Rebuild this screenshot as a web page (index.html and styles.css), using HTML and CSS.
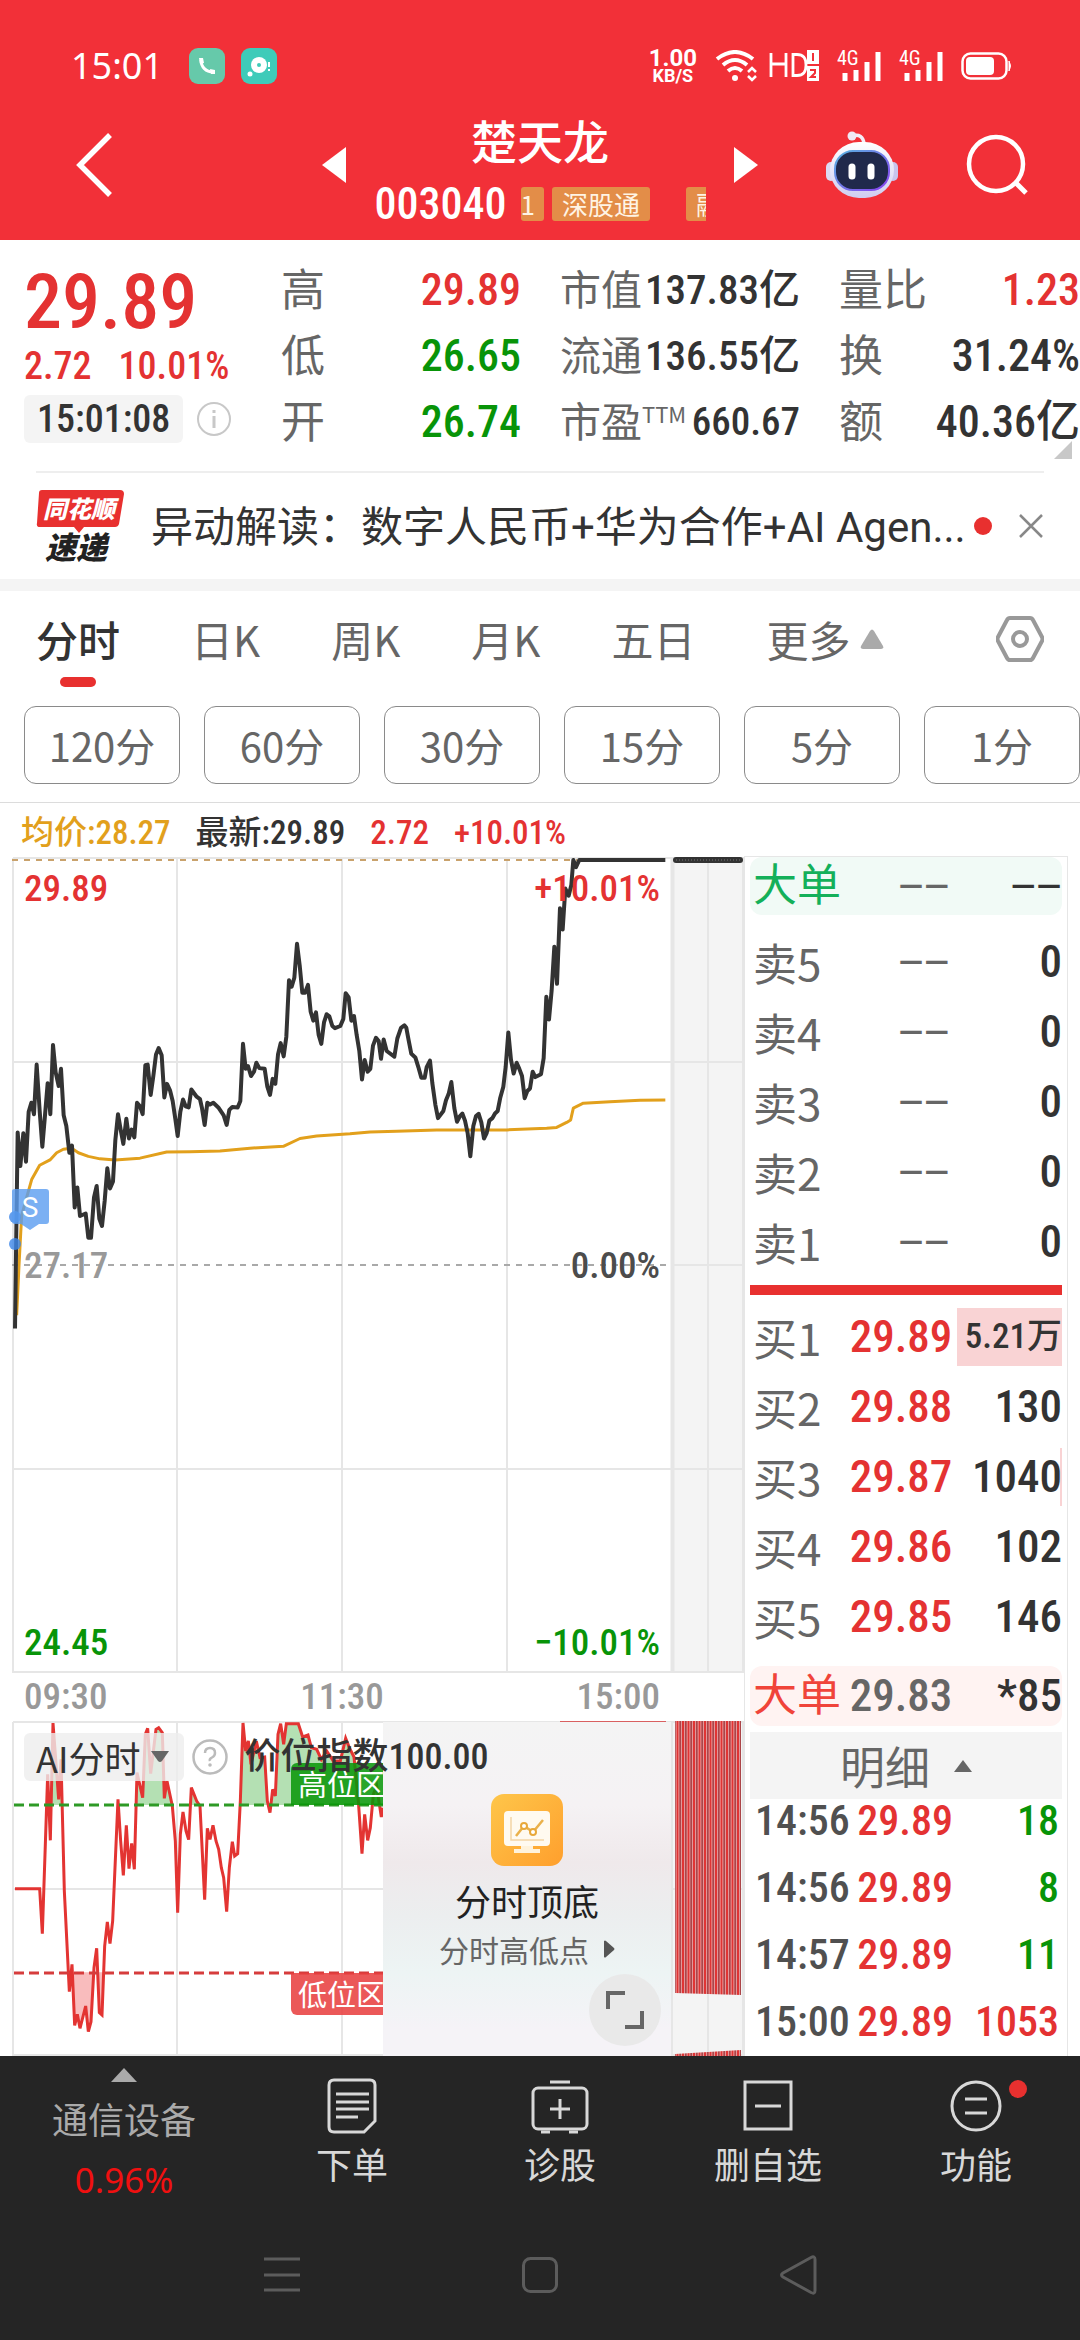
FILE: index.html
```html
<!DOCTYPE html>
<html lang="zh-CN">
<head>
<meta charset="utf-8">
<meta name="viewport" content="width=device-width">
<title>楚天龙 003040</title>
<link rel="stylesheet" href="styles.css">
</head>
<body>
<header class="top">
  <div class="statusbar">
    <span class="clock">15:01</span>
    <svg class="app-icon" width="36" height="36" viewBox="0 0 36 36"><rect width="36" height="36" rx="9" fill="#66c9aa"/><path d="M12 12c0 7 5 12 12 12" fill="none" stroke="#fff" stroke-width="3"/><path d="M10 10h4l1 5-4 1zM21 21l5 1v4h-4z" fill="#fff"/></svg>
    <svg class="app-icon" width="36" height="36" viewBox="0 0 36 36"><rect width="36" height="36" rx="9" fill="#3fcbb9"/><circle cx="18" cy="17" r="8" fill="#fff"/><circle cx="18" cy="17" r="2" fill="#3fcbb9"/><circle cx="9" cy="26" r="2.500" fill="#fff"/><path d="M28 14v5M28 21v2" stroke="#fff" stroke-width="2"/></svg>
    <span class="speed"><b>1.00</b><b class="unit">KB/S</b></span>
    <svg class="wifi" width="42" height="32" viewBox="0 0 42 32" fill="none" stroke="#fff" stroke-width="4"><path d="M2 9q18-14 36 0M8 15q12-10 24 0M13 21q7-6 14 0"/><circle cx="20" cy="28" r="3" fill="#fff" stroke="none"/><path d="M33 22l4-4 4 4M33 26l4 4 4-4" stroke-width="2.500"/></svg>
    <svg class="hd" width="50" height="32" viewBox="0 0 50 32"><path d="M2 3v24M17 3v24M2 14h15M24 4.500v21h4c7 0 9-4 9-10.500S35 4.500 28 4.500z" fill="none" stroke="#fff" stroke-width="2.800"/><path d="M38 0h12v14H38zM38 16h12v15H38z" fill="#fff"/><path d="M44 3v8M41 20h5v3l-4 4h5" fill="none" stroke="#f23038" stroke-width="2"/></svg>
    <svg class="signal" width="44" height="32" viewBox="0 0 44 32"><text x="0" y="15" class="g4">4G</text><path d="M8 31v-8M19 31V20M30 31V12M41 31V2" stroke="#fff" stroke-width="5"/></svg>
    <svg class="signal" width="44" height="32" viewBox="0 0 44 32"><text x="0" y="15" class="g4">4G</text><path d="M8 31v-8M19 31V20M30 31V12M41 31V2" stroke="#fff" stroke-width="5"/></svg>
    <svg class="battery" width="50" height="28" viewBox="0 0 50 28"><rect x="1.500" y="1.500" width="44" height="25" rx="8" fill="none" stroke="#fff" stroke-width="2.500"/><rect x="5" y="5" width="28" height="18" rx="4" fill="#fff"/><path d="M48 9q3 5 0 10z" fill="#fff" stroke="#fff"/></svg>
  </div>
  <div class="titlebar">
    <button class="back" aria-label="返回"><svg width="38" height="64" viewBox="0 0 38 64"><path d="M34 2L4 32l30 30" fill="none" stroke="#fff" stroke-width="5.500"/></svg></button>
    <div class="stock">
      <button aria-label="上一只"><svg width="24" height="36" viewBox="0 0 24 36"><path d="M24 0v36L0 18z" fill="#fff"/></svg></button>
      <div class="names">
        <h1>楚天龙</h1>
        <div class="code"><span class="num">003040</span><div class="tags"><span class="tag first">1</span><span class="tag">深股通</span><span class="tag far">融</span></div></div>
      </div>
      <button aria-label="下一只"><svg width="24" height="36" viewBox="0 0 24 36"><path d="M0 0v36l24-18z" fill="#fff"/></svg></button>
    </div>
    <div class="tools">
      <button aria-label="智能助手"><svg width="74" height="68" viewBox="0 0 74 68"><defs><linearGradient id="head" x2="0" y2="1"><stop offset="0" stop-color="#fff"/><stop offset="1" stop-color="#cfcdf0"/></linearGradient><linearGradient id="rim" x2="1" y2="1"><stop offset="0" stop-color="#58b4e0"/><stop offset="1" stop-color="#8a3ff0"/></linearGradient></defs><path d="M27 5q11-3 12 8" fill="none" stroke="#f4eef8" stroke-width="3.500"/><circle cx="27" cy="5" r="4.500" fill="#f0e8f4"/><rect x="1" y="31" width="10" height="19" rx="5" fill="#dcdaf2"/><rect x="63" y="31" width="10" height="19" rx="5" fill="#c8c4ec"/><rect x="5" y="11" width="64" height="56" rx="29" fill="url(#head)"/><rect x="10" y="20" width="54" height="39" rx="18" fill="#20294b" stroke="url(#rim)" stroke-width="2"/><path d="M27 36v9M46 36v9" stroke="#fff" stroke-width="7" stroke-linecap="round"/></svg></button>
      <button aria-label="搜索"><svg width="62" height="62" viewBox="0 0 62 62" fill="none" stroke="#fff" stroke-width="4.500"><circle cx="30" cy="30" r="27"/><path d="M49 48l11 11" stroke-width="5"/></svg></button>
    </div>
  </div>
</header>

<section class="quote">
  <div class="last">
    <div class="price num up">29.89</div>
    <div class="change num up"><span>2.72</span><span>10.01%</span></div>
    <div class="when"><time class="num">15:01:08</time><svg width="36" height="36" viewBox="0 0 36 36"><circle cx="18" cy="18" r="16" fill="none" stroke="#c8c8c8" stroke-width="2"/><path d="M18 15v12M18 9v3" stroke="#c8c8c8" stroke-width="3"/></svg></div>
  </div>
  <dl><div><dt>高</dt><dd class="num up">29.89</dd></div><div><dt>低</dt><dd class="num down">26.65</dd></div><div><dt>开</dt><dd class="num down">26.74</dd></div></dl>
  <dl class="small"><div><dt>市值</dt><dd class="num">137.83亿</dd></div><div><dt>流通</dt><dd class="num">136.55亿</dd></div><div><dt>市盈<sup>TTM</sup></dt><dd class="num pe">660.67</dd></div></dl>
  <dl><div><dt>量比</dt><dd class="num up">1.23</dd></div><div><dt>换</dt><dd class="num">31.24%</dd></div><div><dt>额</dt><dd class="num">40.36亿</dd></div></dl>
</section>

<section class="news">
  <svg width="88" height="74" viewBox="0 0 88 74"><path d="M6 1h78q4 0 4 4l-5 30q-1 3-4 3H48l-5 6-5-6H4q-4 0-3-4L3 4q0-3 3-3z" fill="#e8302f"/><text x="7" y="29" class="logo-a">同花顺</text><text x="9" y="70" class="logo-b">速递</text></svg>
  <a href="#news">异动解读<span class="colon">：</span>数字人民币+华为合作+AI Agen...</a><i class="dot"></i>
  <button aria-label="关闭"><svg width="26" height="24" viewBox="0 0 26 24"><path d="M2 1l22 22M24 1L2 23" stroke="#888" stroke-width="2.500"/></svg></button>
</section>

<nav class="tabs">
  <button class="on">分时</button><button>日K</button><button>周K</button><button>月K</button><button>五日</button><button class="more">更多<svg width="24" height="20" viewBox="0 0 24 20"><path d="M10 2q2-3 4 0l9 15q1 3-2 3H3q-3 0-2-3z" fill="#aaa"/></svg></button>
  <button class="gear" aria-label="设置"><svg width="48" height="46" viewBox="0 0 48 46" fill="none" stroke="#999" stroke-width="4"><path d="M14 2h20q2 0 3 2l9 17q1 2 0 4l-9 17q-1 2-3 2H14q-2 0-3-2L2 25q-1-2 0-4l9-17q1-2 3-2z"/><circle cx="24" cy="23" r="7"/></svg></button>
</nav>
<div class="periods"><button>120分</button><button>60分</button><button>30分</button><button>15分</button><button>5分</button><button>1分</button></div>

<main>
  <section class="charts">
    <div class="legend num"><span class="avg">均价:28.27</span><span>最新:29.89</span><span class="up">2.72</span><span class="up">+10.01%</span></div>
    <div class="plot">
      <svg viewBox="0 0 744 816">
        <path d="M672 2h72v813h-72z" fill="#f4f4f4"/>
        <path d="M13 1h731M13 205h731M672 408h72M13 612h731M13 815h731M13 1v815M177 1v815M342 1v815M507 1v815M708 1v815M743 1v815" fill="none" stroke="#e6e6e6" stroke-width="2"/>
        <path d="M672.500 1v815" stroke="#e6e6e6" stroke-width="4"/>
        <path d="M12 3h565" stroke="#c9a26c" stroke-width="2" stroke-dasharray="6 6"/>
        <path d="M12 408h655" stroke="#a9a9a9" stroke-width="2" stroke-dasharray="6 6"/>
        <g transform="translate(0 -56) scale(.33333 .35714)" fill="none" stroke-linejoin="round">
          <path class="line avg-line" d="M50 1440L57 1300 65 1160 80 1110 95 1060 119 1020 150 1005 170 985 190 975 215 972 235 985 265 995 300 1002 345 1005 420 1000 500 983 570 982 660 980 750 972 850 967 900 945 950 938 1050 932 1110 927 1190 925 1310 921 1520 921 1640 916 1670 914 1700 900 1712 893 1720 860 1750 846 1830 842 1920 838 1996 837"/>
          <path class="line" d="M45 1477L53 928 61 1022 70 930 78 1010 86 870 94 845 102 877 110 738 119 868 127 968 135 880 143 790 151 877 159 683 167 760 176 798 183 750 191 880 199 910 208 985 216 965 224 1138 232 1082 240 1162 257 1155 265 1223 273 1223 282 1110 290 1078 298 1170 306 1190 314 1120 322 1028 330 1085 339 1065 346 950 354 877 362 920 370 960 379 890 387 945 395 920 403 942 411 845 420 855 428 877 436 740 443 738 452 823 460 770 468 710 476 692 485 712 493 830 501 792 510 810 518 840 526 890 533 938 541 870 549 836 557 855 566 858 574 808 590 828 600 835 606 860 614 907 622 845 630 850 640 845 655 858 671 880 680 907 688 865 697 857 713 858 721 840 729 680 737 750 744 742 753 770 762 758 769 733 778 748 794 750 802 800 810 823 818 778 826 792 834 710 842 678 851 715 859 660 867 502 875 520 883 495 891 400 899 460 907 537 915 537 924 515 932 590 940 615 948 592 956 655 964 680 972 620 980 597 988 603 997 630 1005 636 1021 630 1030 610 1037 538 1046 550 1054 615 1062 602 1070 655 1078 700 1086 780 1094 725 1103 758 1111 750 1119 685 1128 663 1136 672 1143 722 1151 668 1160 700 1183 716 1192 665 1203 635 1213 628 1219 635 1226 670 1234 708 1246 718 1255 745 1264 775 1274 775 1280 745 1290 727 1297 790 1306 850 1314 888 1330 868 1338 838 1346 820 1354 787 1363 860 1371 898 1380 882 1387 875 1395 895 1403 930 1411 995 1420 910 1428 882 1436 876 1444 900 1452 945 1460 930 1468 895 1477 888 1485 875 1493 868 1501 830 1510 800 1517 745 1525 648 1533 725 1541 763 1550 733 1558 750 1566 770 1574 832 1582 812 1590 805 1598 758 1606 773 1623 765 1631 720 1639 548 1647 612 1655 530 1663 408 1671 512 1680 300 1688 360 1696 245 1706 265 1714 235 1720 165 1728 185 1738 165 1996 165"/>
        </g>
        <path d="M676 3h64" stroke="#333" stroke-width="6" stroke-linecap="round"/>
        <path d="M676 3h64" stroke="#777" stroke-width="1" stroke-dasharray="1 2"/>
        <circle cx="15" cy="360" r="6" fill="#3c86e8" opacity=".8"/><circle cx="15" cy="387" r="6" fill="#3c86e8" opacity=".8"/>
        <path d="M12 334q0-2 3-2h31q3 0 3 3v29q0 3-3 3h-7l-9 6-9-6h-6q-3 0-3-3z" fill="#5a9cf0" opacity=".8"/>
        <text x="30" y="360" class="s-mark">S</text>
      </svg>
      <div class="scale num"><p class="up"><span>29.89</span><span>+10.01%</span></p><p class="mid"><span>27.17</span><span>0.00%</span></p><p class="down"><span>24.45</span><span>−10.01%</span></p></div>
    </div>
    <div class="times num"><span>09:30</span><span>11:30</span><span>15:00</span></div>
    <div class="ai">
      <svg viewBox="0 0 744 335">
        <defs>
          <pattern id="bars" width="11" height="300" patternUnits="userSpaceOnUse"><path fill="#f3b4b5" d="M0 0h11v300H0z"/><path fill="#df3434" d="M0 0h2v300H0zM5.500 0h2v300h-2z"/><path fill="#ab4549" d="M2.750 0h2v300h-2zM8.250 0h2v300h-2z"/></pattern>
          <path id="idx" d="M45 863L119 863 127 998 135 760 143 520 151 718 159 366 176 595 183 475 193 870 208 1172 216 1090 224 1273 232 1240 240 1282 257 1215 265 1292 273 1262 282 1100 290 1042 298 1235 306 1242 314 1035 322 963 330 1028 338 960 354 595 362 720 370 823 379 673 387 803 395 727 403 805 411 515 428 590 436 400 443 382 452 518 468 385 476 380 487 395 493 592 501 540 517 615 526 720 533 935 541 700 549 633 558 690 566 716 574 560 590 600 600 615 614 896 622 682 630 715 639 673 648 720 656 745 664 800 671 830 680 932 688 800 697 722 704 765 713 758 721 600 729 366 737 450 745 420 753 490 769 420 780 470 794 468 802 600 810 635 818 565 826 585 834 400 842 368 851 430 859 368 895 368 908 408 924 402 934 440 950 445 964 475 980 450 1000 480 1021 480 1037 412 1048 440 1062 468 1075 600 1086 758 1094 640 1103 718 1111 680 1120 580 1130 555 1144 648 1149 620"/>
          <clipPath id="high"><path d="M0 360h1200v252H0z"/></clipPath>
          <clipPath id="low"><path d="M216 1114h1200v252H216z"/></clipPath>
        </defs>
        <path d="M672 1h72v334h-72z" fill="#f4f4f4"/>
        <path d="M13 1h731M13 168h731M13 334h731M13 1v334M177 1v334M342 1v334M507 1v334M708 1v334M743 1v334M672 1v334" fill="none" stroke="#e6e6e6" stroke-width="2"/>
        <g transform="translate(0 -120) scale(.33333)">
          <use href="#idx" fill="#b4e0b3" clip-path="url(#high)"/>
          <use href="#idx" fill="#f9bcbd" clip-path="url(#low)"/>
          <use href="#idx" fill="none" stroke="#e33432" stroke-width="9"/>
        </g>
        <path d="M14 84h369" stroke="#2e9a26" stroke-width="3" stroke-dasharray="10 5"/>
        <path d="M14 252h369" stroke="#d63c3c" stroke-width="3" stroke-dasharray="10 5"/>
        <path d="M560 1h106" stroke="#d96060" stroke-width="2"/>
        <path d="M675 0h66v274l-66-2z" fill="url(#bars)"/>
        <path d="M675 333l66-4v6h-66z" fill="url(#bars)"/>
      </svg>
      <span class="zone high">高位区</span><span class="zone low">低位区</span>
      <div class="card">
        <svg width="72" height="72" viewBox="0 0 72 72"><defs><linearGradient id="gold" x2="1" y2="1"><stop offset="0" stop-color="#fec64a"/><stop offset="1" stop-color="#ff9f2d"/></linearGradient></defs><rect width="72" height="72" rx="13" fill="url(#gold)"/><rect x="13" y="17" width="46" height="35" rx="4" fill="#fffaf0"/><path d="M30 52h12v3h7v4H23v-4h7z" fill="#fff3dc"/><path d="M20 23v23h33" fill="none" stroke="#f3d5a5" stroke-width="1.500"/><path d="M25 42l8-10 9 6 10-12" fill="none" stroke="#eab14b" stroke-width="2.500"/><circle cx="33" cy="32" r="3" fill="#fff" stroke="#e8a83a" stroke-width="2"/><circle cx="42" cy="38" r="3" fill="#fff" stroke="#e8a83a" stroke-width="2"/></svg>
        <strong>分时顶底</strong>
        <a href="#tops">分时高低点<svg width="12" height="18" viewBox="0 0 12 18"><path d="M1 1q1-1 2 0l8 7q1 1 0 2l-8 7q-1 1-2 0z" fill="#555"/></svg></a>
      </div>
      <button class="expand" aria-label="全屏"><svg width="38" height="38" viewBox="0 0 38 38" fill="none" stroke="#666" stroke-width="4"><path d="M2 18V2h17M36 20v16H19"/></svg></button>
      <div class="ai-head"><button class="pick">AI分时<svg width="18" height="12" viewBox="0 0 18 12"><path d="M0 0h18L11 10q-2 2-4 0z" fill="#666"/></svg></button><svg width="36" height="36" viewBox="0 0 36 36"><circle cx="18" cy="18" r="16.500" fill="none" stroke="#bbb" stroke-width="2.500"/><path d="M13 14q0-5 5-5t5 5q0 3-3 4.500t-2 3.500" fill="none" stroke="#bbb" stroke-width="2.500"/><circle cx="18" cy="26" r="1.800" fill="#bbb"/></svg><span class="num">价位指数100.00</span></div>
    </div>
  </section>

  <section class="book">
    <div class="big sell num"><b>大单</b><span class="dash">−−</span><em class="dash">−−</em></div>
    <table class="num">
      <tr><th>卖5</th><td class="dash">−−</td><td>0</td></tr>
      <tr><th>卖4</th><td class="dash">−−</td><td>0</td></tr>
      <tr><th>卖3</th><td class="dash">−−</td><td>0</td></tr>
      <tr><th>卖2</th><td class="dash">−−</td><td>0</td></tr>
      <tr><th>卖1</th><td class="dash">−−</td><td>0</td></tr>
    </table>
    <hr>
    <table class="num buy">
      <tr><th>买1</th><td>29.89</td><td class="vol" style="background-size:105px 58px">5.21万</td></tr>
      <tr><th>买2</th><td>29.88</td><td>130</td></tr>
      <tr><th>买3</th><td>29.87</td><td class="bar" style="background-size:2px 58px">1040</td></tr>
      <tr><th>买4</th><td>29.86</td><td>102</td></tr>
      <tr><th>买5</th><td>29.85</td><td>146</td></tr>
    </table>
    <div class="big bid num"><b>大单</b><span>29.83</span><em>*85</em></div>
    <button class="detail">明细<svg width="18" height="12" viewBox="0 0 18 12"><path d="M9 0l9 12H0z" fill="#666"/></svg></button>
    <table class="num ticks">
      <tr><th>14:56</th><td>29.89</td><td class="down">18</td></tr>
      <tr><th>14:56</th><td>29.89</td><td class="down">8</td></tr>
      <tr><th>14:57</th><td>29.89</td><td class="down">11</td></tr>
      <tr><th>15:00</th><td>29.89</td><td class="up">1053</td></tr>
    </table>
  </section>
</main>

<footer>
  <div class="toolbar">
    <button class="sector"><svg width="26" height="14" viewBox="0 0 26 14"><path d="M13 0l13 14H0z" fill="#aaa"/></svg><span>通信设备</span><b>0.96%</b></button>
    <button><svg width="50" height="56" viewBox="0 0 50 56" fill="none" stroke="#d8d8d8" stroke-width="3"><path d="M7 2h36q5 0 5 5v36L37 54H7q-5 0-5-5V7q0-5 5-5z"/><path d="M9 16h33M9 24h33M9 31h33M9 39h22"/></svg>下单</button>
    <button><svg width="58" height="56" viewBox="0 0 58 56" fill="none" stroke="#d8d8d8" stroke-width="3"><rect x="2" y="10" width="54" height="41" rx="5"/><path d="M19 4h20M29 21v20M19 31h20M10 54h9M38 54h9"/></svg>诊股</button>
    <button><svg width="50" height="56" viewBox="0 0 50 56" fill="none" stroke="#d8d8d8" stroke-width="3"><path d="M2 4h46v47H2zM12 28h26"/></svg>删自选</button>
    <button class="dotted"><svg width="52" height="56" viewBox="0 0 52 56" fill="none" stroke="#d8d8d8" stroke-width="3"><circle cx="26" cy="28" r="24"/><path d="M15 21h22M15 35h22"/></svg>功能</button>
  </div>
  <div class="sysnav">
    <button aria-label="最近"><svg width="36" height="36" viewBox="0 0 36 36"><path d="M0 2h36M0 18h36M0 33h36" stroke="#5c5c5c" stroke-width="3"/></svg></button>
    <button aria-label="主页"><svg width="36" height="36" viewBox="0 0 36 36"><rect x="1.500" y="1.500" width="33" height="33" rx="7" fill="none" stroke="#5c5c5c" stroke-width="3"/></svg></button>
    <button aria-label="返回"><svg width="38" height="40" viewBox="0 0 38 40"><path d="M32 2.500q4-2 4 2v31q0 4-4 2L4 22q-3-2 0-4z" fill="none" stroke="#5c5c5c" stroke-width="3"/></svg></button>
  </div>
</footer>
</body>
</html>
```
FILE: styles.css
```css
* { box-sizing: border-box; }
body {
  margin: 0;
  min-height: 100vh;
  display: flex;
  flex-direction: column;
  background: #fff;
  color: #333;
  font-family: "Noto Sans CJK SC", sans-serif;
  font-size: 42px;
}
button { border: 0; padding: 0; background: none; font: inherit; color: inherit; white-space: nowrap; }
a { color: inherit; text-decoration: none; }
svg { flex: none; display: block; }
h1, p, dl, dd { margin: 0; }
.num { font-family: "Roboto Condensed", "Noto Sans CJK SC", sans-serif; font-weight: 500; }
.up { color: #e43232; }
.down { color: #089408; }

/* header */
.top { background: #f23038; color: #fff; }
.statusbar { display: flex; align-items: center; height: 90px; padding: 42px 69px 0 71px; }
.clock { font-family: "Noto Sans", sans-serif; font-size: 36px; line-height: 48px; }
.app-icon { margin-left: 16px; }
.clock + .app-icon { margin-left: 26px; }
.speed { margin-left: auto; display: flex; flex-direction: column; align-items: center; font-family: Roboto, sans-serif; font-size: 24px; line-height: 20px; }
.unit { font-size: 18px; line-height: 16px; }
.wifi { margin-left: 18px; }
.hd { margin-left: 12px; }
.signal { margin-left: 18px; }
.g4 { font: 20px "Roboto Condensed", sans-serif; fill: #fff; }
.battery { margin-left: 18px; }
.titlebar { display: grid; grid-template-columns: 1fr 436px 1fr; align-items: center; height: 150px; }
.back { justify-self: start; margin-left: 76px; }
.stock { display: flex; align-items: center; justify-content: space-between; }
.names { display: flex; flex-direction: column; align-items: center; gap: 15px; padding-top: 7px; }
h1 { font-size: 46px; line-height: 56px; font-weight: 500; }
.code { display: flex; align-items: center; gap: 14px; width: 331px; font-size: 44px; line-height: 44px; }
.tags { flex: 1; display: flex; gap: 8px; overflow: hidden; }
.tag { flex: none; padding: 0 10px; border-radius: 3px; background: #e38d48; color: #fff4e4; font-size: 26px; line-height: 34px; }
.tag.first { padding: 0 9px 0 0; }
.tag.far { margin-left: 28px; }
.tools { display: flex; align-items: center; justify-content: flex-end; gap: 67px; padding-right: 52px; }

/* quote */
.quote { position: relative; display: grid; grid-template-columns: 218fr 240fr 240fr 241fr; column-gap: 39px; padding: 17px 0 16px 24px; font-size: 44px; }
.quote::after { content: ""; position: absolute; right: 8px; bottom: 12px; border: 9px solid transparent; border-right-color: #c8c8c8; border-bottom-color: #c8c8c8; }
.price { padding-top: 7px; font-size: 76px; line-height: 76px; }
.change { display: flex; gap: 27px; font-size: 38px; line-height: 52px; }
.when { display: flex; align-items: center; gap: 13px; margin-top: 3px; }
.when time { padding: 0 13px; border-radius: 6px; background: #f4f4f4; font-size: 38px; line-height: 48px; }
.quote dl > div { display: flex; justify-content: space-between; line-height: 66px; height: 66px; white-space: nowrap; }
.quote dt { color: #666; line-height: 61px; }
.small dt { font-size: 41px; }
.small dd { font-size: 41px; }
.small .pe { font-size: 39px; }
sup { font-size: 22px; line-height: 22px; vertical-align: 14px; }

/* news */
.news { display: flex; align-items: center; height: 108px; margin: 0 36px; border-top: 2px solid #eee; }
.news a { margin-left: 27px; white-space: nowrap; line-height: 60px; font-family: Roboto, "Noto Sans CJK SC", sans-serif; }
.colon { font-family: "Noto Sans CJK TC", sans-serif; }
.logo-a, .logo-b { font-family: "Noto Sans CJK SC", sans-serif; font-weight: 900; font-style: italic; }
.logo-a { font-size: 24px; fill: #fff; }
.logo-b { font-size: 31px; fill: #222; }
.dot { width: 18px; height: 18px; margin-left: 8px; border-radius: 9px; background: #e8302f; }
.news button { margin-left: auto; }

/* tabs */
.tabs { display: flex; align-items: flex-start; gap: 71px; padding: 18px 36px 0; border-top: 12px solid #f4f4f4; color: #666; }
.tabs button { line-height: 60px; }
.tabs .on { color: #333; font-weight: 500; }
.on::after { content: ""; display: block; width: 36px; height: 10px; margin: 8px auto 0; border-radius: 5px; background: #e8302f; }
.more { display: flex; gap: 10px; align-items: flex-start; }
.more svg { margin-top: 20px; }
.gear { margin-left: auto; padding-top: 7px; }
.periods { display: flex; gap: 24px; padding: 19px 0 18px 24px; border-bottom: 1px solid #dcdcdc; }
.periods button { flex: 1; height: 78px; border: 1px solid #8a8a8a; border-radius: 12px; color: #666; font-size: 40px; }

/* charts */
main { display: grid; grid-template-columns: 744fr 324fr; padding-right: 12px; }
.charts { min-width: 0; }
.legend { display: flex; gap: 25px; padding: 6px 0 0 21px; font-size: 33px; line-height: 48px; white-space: nowrap; }
.avg { color: #e2a01c; }
.plot, .ai { position: relative; }
.plot > svg, .ai > svg { width: 100%; height: auto; }
.line { stroke: #333; stroke-width: 4px; vector-effect: non-scaling-stroke; }
.avg-line { stroke: #e2a01c; stroke-width: 3px; }
.s-mark { font: 28px Roboto, sans-serif; fill: #fff; text-anchor: middle; }
.scale { position: absolute; inset: 10px 84px 8px 24px; display: flex; flex-direction: column; justify-content: space-between; font-size: 37px; line-height: 44px; }
.scale p, .times { display: flex; justify-content: space-between; }
.mid { color: #4c4c4c; }
.mid span:first-child { color: #999; }
.times { padding: 0 84px 0 24px; font-size: 37px; line-height: 48px; color: #999; }
.zone { position: absolute; left: 291px; width: 100px; padding-left: 7px; color: #fff; font-size: 29px; line-height: 40px; height: 42px; white-space: nowrap; }
.high { top: 42px; border-radius: 6px 0 0 0; background: rgba(8, 150, 8, .86); }
.low { top: 252px; border-radius: 0 0 0 6px; background: rgba(232, 60, 60, .86); }
.card { position: absolute; inset: 1px 73px 0 auto; width: 288px; padding-top: 72px; display: flex; flex-direction: column; align-items: center; background: linear-gradient(#f4f4f4 0%, #f5f2f4 25%, #efe9eb 42%, #eceeef 58%, #edf4f4 75%, #f5f3f7 92%); color: #222; }
.card strong { margin-top: 6px; font-size: 36px; line-height: 56px; font-weight: 400; }
.card a { display: flex; align-items: center; gap: 14px; font-size: 30px; line-height: 42px; color: #666; }
.expand { position: absolute; right: 83px; bottom: 10px; width: 72px; height: 72px; border-radius: 36px; background: #e9e9e9; display: grid; place-items: center; }
.ai-head { position: absolute; left: 24px; top: 12px; display: flex; align-items: center; gap: 8px; font-size: 36px; line-height: 48px; white-space: nowrap; }
.ai-head .num { margin-left: 8px; }
.pick { display: flex; align-items: center; gap: 11px; padding: 0 15px 0 12px; border-radius: 6px; background: rgba(238, 238, 238, .8); }

/* order book */
.book { margin-top: 53px; padding: 0 5px; border: 1px solid #e6e6e6; border-bottom: 0; font-size: 45px; white-space: nowrap; }
.book table { width: 100%; table-layout: fixed; border-spacing: 0; line-height: 70px; }
.book th { width: 32%; padding: 0 0 0 3px; text-align: left; font-family: "Noto Sans CJK SC", sans-serif; font-weight: 400; color: #666; font-size: 44px; }
.book td { width: 36%; padding: 0; text-align: right; }
.book td:nth-child(2) { width: 32%; }
.book tr { height: 70px; }
.book th, .book td { line-height: 60px; }
.book .dash { font-family: "Liberation Sans", sans-serif; color: #666; font-size: 44px; font-weight: 400; }
.buy td:nth-child(2), .ticks td:nth-child(2) { color: #e43232; }
.vol, .bar { background: linear-gradient(#f9d3d4, #f9d3d4) right center no-repeat; }
.book .vol { font-size: 35px; }
.big { display: grid; grid-template-columns: 32% 32% 36%; align-items: center; height: 58px; line-height: 58px; text-align: right; border-radius: 12px; margin-bottom: 12px; }
.big b { padding-left: 3px; text-align: left; font-weight: 400; font-size: 44px; }
.big em { font-style: normal; }
.book .big em { color: #333; }
.sell { background: #f1faf6; }
.sell b { color: #14b05a; }
.bid { height: 60px; margin: 14px 0 6px; background: #fff3f2; color: #666; }
.bid b { color: #f0443a; }
hr { height: 10px; margin: 8px 0 7px; border: 0; background: #e8302f; }
.detail { width: 100%; display: flex; align-items: center; justify-content: center; gap: 24px; height: 67px; background: #f4f4f4; color: #666; }
.book .ticks { font-size: 42px; }
.book .ticks tr { height: 67px; }
.book .ticks th, .book .ticks td { padding-bottom: 23px; line-height: 44px; vertical-align: top; }
.book .ticks th { padding-left: 5px; font-family: inherit; font-size: 42px; font-weight: 500; color: #505050; }
.book .ticks td { width: 34%; padding-right: 3px; }
.book .ticks td:nth-child(2) { width: 34%; }
.book .ticks tr:last-child { height: 54px; }
.book .ticks tr:last-child > * { padding-bottom: 10px; }

/* footer */
footer { margin-top: auto; background: #252525; color: #d8d8d8; font-size: 36px; }
.toolbar { display: grid; grid-template-columns: 248fr repeat(4, 208fr); height: 156px; }
.toolbar button { position: relative; display: flex; flex-direction: column; align-items: center; justify-content: flex-start; padding-top: 22px; line-height: 58px; }
.toolbar .sector { padding-top: 12px; color: #aaa; }
.sector span { margin-top: 7px; }
.sector b { margin-top: 4px; font-family: "Noto Sans", sans-serif; font-size: 35px; font-weight: 400; color: #f01010; }
.dotted::after { content: ""; position: absolute; left: 50%; top: 24px; width: 18px; height: 18px; margin-left: 33px; border-radius: 9px; background: #e8302f; }
.sysnav { display: grid; grid-template-columns: repeat(3, 1fr); place-items: center; height: 129px; padding: 0 153px 4px; }
```
